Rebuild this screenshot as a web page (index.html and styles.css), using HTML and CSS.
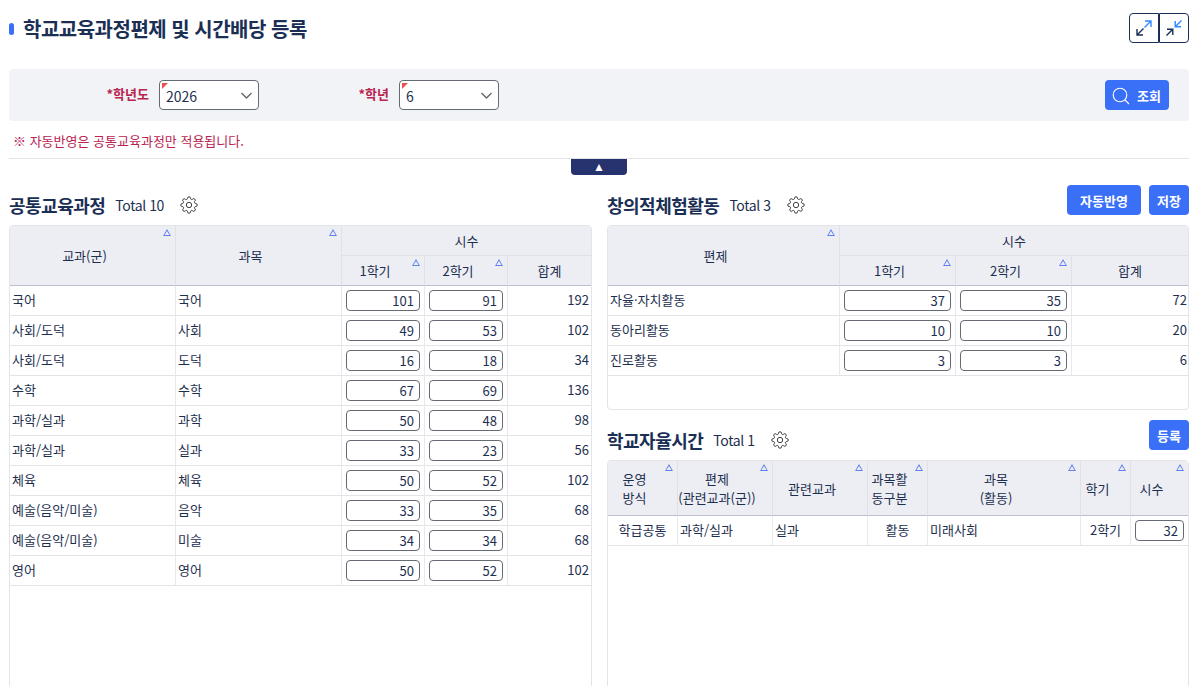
FILE: index.html
```html
<!DOCTYPE html>
<html lang="ko">
<head>
<meta charset="utf-8">
<title>학교교육과정편제 및 시간배당 등록</title>
<link rel="stylesheet" href="styles.css">
</head>
<body>
<svg class="defs" width="0" height="0" aria-hidden="true"><symbol id="gear" viewBox="0 0 24 24"><circle cx="12" cy="12" r="3.600"/><path d="M19.400 15a1.650 1.650 0 0 0 .33 1.820l.06.06a2 2 0 0 1 0 2.830 2 2 0 0 1-2.830 0l-.06-.06a1.650 1.650 0 0 0-1.820-.33 1.650 1.650 0 0 0-1 1.510V21a2 2 0 0 1-2 2 2 2 0 0 1-2-2v-.09A1.650 1.650 0 0 0 9 19.400a1.650 1.650 0 0 0-1.820.33l-.06.06a2 2 0 0 1-2.830 0 2 2 0 0 1 0-2.830l.06-.06a1.650 1.650 0 0 0 .33-1.820 1.650 1.650 0 0 0-1.510-1H3a2 2 0 0 1-2-2 2 2 0 0 1 2-2h.09A1.650 1.650 0 0 0 4.600 9a1.650 1.650 0 0 0-.33-1.820l-.06-.06a2 2 0 0 1 0-2.830 2 2 0 0 1 2.830 0l.06.06a1.650 1.650 0 0 0 1.820.33H9a1.650 1.650 0 0 0 1-1.510V3a2 2 0 0 1 2-2 2 2 0 0 1 2 2v.09a1.650 1.650 0 0 0 1 1.510 1.650 1.650 0 0 0 1.820-.33l.06-.06a2 2 0 0 1 2.830 0 2 2 0 0 1 0 2.830l-.06.06a1.650 1.650 0 0 0-.33 1.820V9a1.650 1.650 0 0 0 1.510 1H21a2 2 0 0 1 2 2 2 2 0 0 1-2 2h-.09a1.650 1.650 0 0 0-1.510 1z"/></symbol></svg>
<div class="page">
  <header class="title-bar">
    <div class="title-wrap"><span class="marker"></span><h1>학교교육과정편제 및 시간배당 등록</h1></div>
    <div class="view-btns">
      <button class="view-btn" aria-label="확대"><svg width="20" height="20" viewBox="0 0 20 20" fill="none" stroke-width="1.400"><path d="M10.500 9.500 17 3M11 3H17V9" stroke="#2f8cff"/><path d="M9.500 10.500 3 17M3 11V17H9" stroke="#1b2f55"/></svg></button>
      <button class="view-btn" aria-label="축소"><svg width="20" height="20" viewBox="0 0 20 20" fill="none" stroke-width="1.400"><path d="M17.500 2.500 11.200 8.800M11.200 3V8.800H17" stroke="#2f8cff"/><path d="M2.500 17.500 8.800 11.200M3 11.200H8.800V17" stroke="#1b2f55"/></svg></button>
    </div>
  </header>

  <section class="search-bar">
    <label class="field field-year"><span class="field-label">*학년도</span><span class="select"><span class="req-mark"></span>2026<svg class="chev" width="11" height="7" viewBox="0 0 11 7" fill="none"><path d="M.5 1 5.500 6 10.500 1" stroke="#666" stroke-width="1.400"/></svg></span></label>
    <label class="field field-grade"><span class="field-label">*학년</span><span class="select"><span class="req-mark"></span>6<svg class="chev" width="11" height="7" viewBox="0 0 11 7" fill="none"><path d="M.5 1 5.500 6 10.500 1" stroke="#666" stroke-width="1.400"/></svg></span></label>
    <button class="btn btn-search"><svg width="18" height="18" viewBox="0 0 18 18" fill="none" stroke="#fff" stroke-width="1.100"><circle cx="8" cy="8" r="6.800"/><path d="M13 13 17 17"/></svg>조회</button>
  </section>

  <p class="note">※ 자동반영은 공통교육과정만 적용됩니다.</p>
  <div class="divider"><button class="toggle">▲</button></div>

  <main class="columns">
    <section class="panel panel-left">
      <div class="panel-head">
        <h2>공통교육과정</h2><span class="total">Total 10</span>
        <svg class="gear"><use href="#gear"/></svg>
      </div>
      <div class="grid-box grid-left">
        <table class="grid">
          <colgroup><col class="l1"><col class="l2"><col class="l3"><col class="l4"><col></colgroup>
          <thead>
            <tr class="hr30"><th rowspan="2" class="sort">교과(군)</th><th rowspan="2" class="sort">과목</th><th colspan="3">시수</th></tr>
            <tr class="hr30"><th class="sort">1학기</th><th class="sort">2학기</th><th>합계</th></tr>
          </thead>
          <tbody>
            <tr><td>국어</td><td>국어</td><td class="inp"><span class="num-input">101</span></td><td class="inp"><span class="num-input">91</span></td><td class="num">192</td></tr>
            <tr><td>사회/도덕</td><td>사회</td><td class="inp"><span class="num-input">49</span></td><td class="inp"><span class="num-input">53</span></td><td class="num">102</td></tr>
            <tr><td>사회/도덕</td><td>도덕</td><td class="inp"><span class="num-input">16</span></td><td class="inp"><span class="num-input">18</span></td><td class="num">34</td></tr>
            <tr><td>수학</td><td>수학</td><td class="inp"><span class="num-input">67</span></td><td class="inp"><span class="num-input">69</span></td><td class="num">136</td></tr>
            <tr><td>과학/실과</td><td>과학</td><td class="inp"><span class="num-input">50</span></td><td class="inp"><span class="num-input">48</span></td><td class="num">98</td></tr>
            <tr><td>과학/실과</td><td>실과</td><td class="inp"><span class="num-input">33</span></td><td class="inp"><span class="num-input">23</span></td><td class="num">56</td></tr>
            <tr><td>체육</td><td>체육</td><td class="inp"><span class="num-input">50</span></td><td class="inp"><span class="num-input">52</span></td><td class="num">102</td></tr>
            <tr><td>예술(음악/미술)</td><td>음악</td><td class="inp"><span class="num-input">33</span></td><td class="inp"><span class="num-input">35</span></td><td class="num">68</td></tr>
            <tr><td>예술(음악/미술)</td><td>미술</td><td class="inp"><span class="num-input">34</span></td><td class="inp"><span class="num-input">34</span></td><td class="num">68</td></tr>
            <tr><td>영어</td><td>영어</td><td class="inp"><span class="num-input">50</span></td><td class="inp"><span class="num-input">52</span></td><td class="num">102</td></tr>
          </tbody>
        </table>
      </div>
    </section>

    <section class="panel panel-right">
      <div class="panel-head">
        <h2>창의적체험활동</h2><span class="total">Total 3</span>
        <svg class="gear"><use href="#gear"/></svg>
        <div class="actions"><button class="btn btn-wide">자동반영</button><button class="btn">저장</button></div>
      </div>
      <div class="grid-box grid-activity">
        <table class="grid">
          <colgroup><col class="r1"><col class="r2"><col class="r3"><col></colgroup>
          <thead>
            <tr class="hr30"><th rowspan="2" class="sort">편제</th><th colspan="3">시수</th></tr>
            <tr class="hr30"><th class="sort">1학기</th><th class="sort">2학기</th><th>합계</th></tr>
          </thead>
          <tbody>
            <tr><td>자율·자치활동</td><td class="inp"><span class="num-input">37</span></td><td class="inp"><span class="num-input">35</span></td><td class="num">72</td></tr>
            <tr><td>동아리활동</td><td class="inp"><span class="num-input">10</span></td><td class="inp"><span class="num-input">10</span></td><td class="num">20</td></tr>
            <tr><td>진로활동</td><td class="inp"><span class="num-input">3</span></td><td class="inp"><span class="num-input">3</span></td><td class="num">6</td></tr>
          </tbody>
        </table>
      </div>

      <div class="panel-head panel-head-second">
        <h2>학교자율시간</h2><span class="total">Total 1</span>
        <svg class="gear"><use href="#gear"/></svg>
        <div class="actions"><button class="btn">등록</button></div>
      </div>
      <div class="grid-box grid-free">
        <table class="grid">
          <colgroup><col class="f1"><col class="f2"><col class="f3"><col class="f4"><col class="f5"><col class="f6"><col></colgroup>
          <thead>
            <tr><th class="sort">운영<br>방식</th><th class="sort">편제<br>(관련교과(군))</th><th class="sort">관련교과</th><th class="sort">과목활<br>동구분</th><th class="sort">과목<br>(활동)</th><th class="sort">학기</th><th class="sort">시수</th></tr>
          </thead>
          <tbody>
            <tr><td class="ctr">학급공통</td><td>과학/실과</td><td>실과</td><td class="ctr">활동</td><td>미래사회</td><td class="ctr">2학기</td><td class="inp"><span class="num-input">32</span></td></tr>
          </tbody>
        </table>
      </div>
    </section>
  </main>
</div>
</body>
</html>
```

FILE: styles.css
```css
* { box-sizing: border-box; }
html, body { margin: 0; height: 100%; overflow: hidden; background: #fff; }
body, button, table { font-family: "Noto Sans CJK KR", "Noto Sans", sans-serif; color: #1d2f4f; }
.defs { display: block; height: 0; }
.page { height: 686px; padding: 0 13px 0 9px; overflow: hidden; }

.title-bar { height: 69px; display: flex; justify-content: space-between; align-items: flex-start; }
.title-wrap { display: flex; align-items: center; height: 58px; }
.marker { width: 5px; height: 12px; border-radius: 3px; background: #3a6ff8; margin-right: 9px; }
h1 { margin: 0; font-size: 20px; font-weight: 700; color: #1b2f55; line-height: 28px; letter-spacing: -.5px; }
.view-btns { display: flex; margin-top: 13px; }
.view-btn { width: 30px; height: 30px; padding: 0; background: #fff; border: 1px solid #1b2f55; display: flex; align-items: center; justify-content: center; }
.view-btn:first-child { border-radius: 4px 0 0 4px; }
.view-btn:last-child { border-radius: 0 4px 4px 0; }

.search-bar { height: 52px; background: #f1f3f7; border-radius: 4px; display: flex; align-items: center; padding-right: 20px; }
.field { display: flex; align-items: center; }
.field-label { font-size: 13px; font-weight: 700; color: #b8234f; text-align: right; margin-right: 10px; line-height: 20px; margin-top: -2px; }
.field-year .field-label { width: 140px; }
.field-grade { margin-left: 90px; }
.field-grade .field-label { width: 40px; }
.select { position: relative; width: 100px; height: 30px; background: #fff; border: 1px solid #666a72; border-radius: 4px; font-size: 14px; line-height: 30px; padding-left: 6px; color: #1d2f4f; }
.req-mark { position: absolute; left: 2px; top: 2px; width: 0; height: 0; border-top: 6px solid #ee4d4d; border-right: 6px solid transparent; }
.chev { position: absolute; right: 6px; top: 11px; }
.btn { height: 30px; padding: 0 7px; min-width: 40px; border: 0; border-radius: 4px; background: #3a6ff8; color: #fff; font-size: 13px; font-weight: 700; white-space: nowrap; }
.btn-search { margin-left: auto; width: 64px; display: flex; align-items: center; padding: 0 0 0 7px; gap: 7px; }
.btn-search svg { margin-top: 1px; }
.btn-wide { width: 74px; }

.note { margin: 0; height: 38px; padding: 10px 0 0 4px; font-size: 13px; line-height: 20px; color: #b8234f; border-bottom: 1px solid #e2e3e6; }
.divider { height: 26px; display: flex; justify-content: center; }
.toggle { width: 56px; height: 16px; padding: 0; border: 0; border-radius: 0 0 4px 4px; background: #26336f; color: #fff; font-size: 12px; line-height: 16px; font-family: "Liberation Sans", sans-serif; }

.columns { display: flex; gap: 15px; align-items: flex-start; }
.panel { min-width: 0; }
.panel-left { width: 583px; }
.panel-right { width: 582px; }
.panel-head { height: 40px; padding: 10px 0; display: flex; align-items: center; }
.panel-head-second { margin-top: 10px; }
h2 { margin: 0; font-size: 18px; font-weight: 700; color: #1b2f55; line-height: 24px; letter-spacing: -.5px; }
.total { font-size: 14px; margin-left: 10px; color: #1d2f4f; letter-spacing: -.4px; }
.gear { margin-left: 16px; width: 18px; height: 18px; flex: none; fill: none; stroke: #222; stroke-width: 1.150; }
.actions { margin-left: auto; display: flex; gap: 8px; margin-top: -10px; }

.grid-box { border: 1px solid #e2e4e9; border-radius: 4px; overflow: hidden; background: #fff; }
.grid-left { height: 470px; }
.grid-activity { height: 185px; }
.grid-free { height: 240px; }
.grid { width: 100%; table-layout: fixed; border-collapse: separate; border-spacing: 0; font-size: 13px; }
.l1, .l2 { width: 166px; }
.l3, .l4 { width: 83px; }
.r1 { width: 232px; }
.r2, .r3 { width: 116px; }
.f1 { width: 70px; }
.f2, .f3 { width: 95px; }
.f4 { width: 60px; }
.f5 { width: 153px; }
.f6 { width: 50px; }

th { position: relative; height: 55px; background: #edeef4; font-weight: 400; padding: 0; text-align: center; line-height: 19px; color: #1d2f4f; border-right: 1px solid #e0e1e7; border-bottom: 1px solid #e0e1e7; }
th:last-child { border-right: 0; }
thead tr:last-child th, th[rowspan] { border-bottom: 1px solid #bcc0cf; }
th.sort { padding-right: 16px; }
.hr30 th { height: 30px; }
.sort::after { content: ""; position: absolute; top: 3px; right: 4px; width: 8px; height: 7px; background: #5f7ff2; clip-path: polygon(evenodd, 50% 0, 100% 100%, 0 100%, 50% 0, 50% 28%, 18% 84%, 82% 84%, 50% 28%); }

td { height: 30px; padding: 0 2px 2px; border-right: 1px solid #e8e9ed; border-bottom: 1px solid #e3e4e8; white-space: nowrap; overflow: hidden; line-height: 18px; }
td:last-child { border-right: 0; }
.num { text-align: right; }
.grid-activity .num { padding-right: 1px; }
.ctr { text-align: center; }
td.inp { padding: 0 4px; }
.num-input { display: block; height: 21px; border: 1px solid #666a72; border-radius: 4px; text-align: right; padding-right: 5px; line-height: 19px; background: #fff; }
```
